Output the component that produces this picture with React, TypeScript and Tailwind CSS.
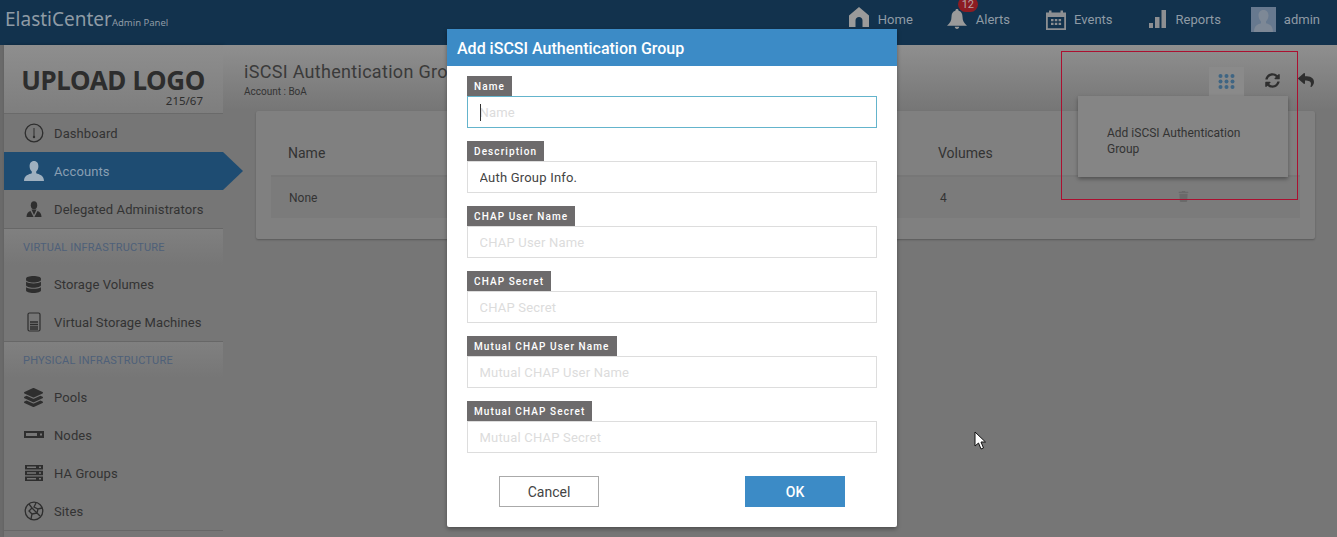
import type { ReactNode } from "react";
import { FaDatabase, FaLayerGroup, FaReply, FaSyncAlt, FaTrash } from "react-icons/fa";

function Gauge() {
  return (
    <svg width="20" height="20" viewBox="0 0 20 20" fill="none" stroke="#2e2e2e">
      <circle cx="10" cy="10" r="8.8" strokeWidth="1.3" />
      <path d="M10 5v8" strokeWidth="1" />
      <circle cx="10" cy="14" r="1.2" fill="#2e2e2e" stroke="none" />
    </svg>
  );
}

function Bust({ color, size }: { color: string; size: number }) {
  return (
    <svg width={size} height={size} viewBox="0 0 20 20" fill={color}>
      <path d="M10 0c3 0 4.400 2.300 4.400 5.200 0 2.300-1 4.300-2.200 5.300v1.700c2.800 1 7.800 2 7.800 7.800H0c0-5.800 5-6.800 7.800-7.800v-1.700C6.600 9.500 5.600 7.500 5.600 5.200 5.600 2.300 7 0 10 0z" />
    </svg>
  );
}

function Delegates() {
  return (
    <svg width="16" height="17" viewBox="0 0 16 17" fill="#2e2e2e">
      <ellipse cx="8" cy="4.200" rx="3.200" ry="4" />
      <path d="M5.500 8.500L8 14l2.500-5.500z" />
      <path d="M0.500 16c0-3.500 1.600-5.500 4-6L7.600 16zM8.400 16l3.100-6c2.400.5 4 2.500 4 6z" />
    </svg>
  );
}

function Machine() {
  return (
    <svg width="14" height="20" viewBox="0 0 14 20" fill="none">
      <rect x="1" y="1" width="12" height="18" rx="1.500" stroke="#2e2e2e" strokeWidth="1.200" />
      <path d="M3 10h8M3 12.500h8M3 15h8M3 17h8" stroke="#2e2e2e" strokeWidth="1.400" />
    </svg>
  );
}

function Node() {
  return (
    <svg width="20" height="8" viewBox="0 0 20 8" fill="#2e2e2e">
      <path d="M0 0h20v7H0zM2 2v3h11V2zM16 2.500v2h2v-2z" fillRule="evenodd" />
    </svg>
  );
}

function Rack() {
  return (
    <svg width="18" height="16" viewBox="0 0 18 16" fill="#2e2e2e">
      <path d="M0 0h18v4.500H0zM2 1.500v1.500h9V1.500zM14 1.500v1.500h2V1.500zM0 5.700h18v4.500H0zM2 7.200v1.500h9V7.200zM14 7.200v1.500h2V7.200zM0 11.400h18V16H0zM2 12.900v1.500h9v-1.500zM14 12.900v1.500h2v-1.500z" fillRule="evenodd" />
    </svg>
  );
}

function Globe() {
  return (
    <svg width="20" height="20" viewBox="0 0 20 20" fill="none" stroke="#2e2e2e" strokeWidth="1.300">
      <circle cx="10" cy="10" r="8.800" />
      <path d="M5 3l3 4-3 3 3 3-1 5M12 2l-2 4 4 2 4-1M14 8l-1 4 3 3M8 7l5 5-5 1" />
    </svg>
  );
}

function HomeIcon() {
  return (
    <svg width="20" height="20" viewBox="0 0 20 20" fill="#9a9a9a" className="-translate-y-[3px]">
      <path d="M10 0l10 8.500V20h-6.500v-6.500c0-2-1.500-3.500-3.500-3.500s-3.500 1.500-3.500 3.500V20H0V8.500z" />
    </svg>
  );
}

function BellIcon() {
  return (
    <svg width="20" height="20" viewBox="0 0 20 20" fill="#9a9a9a" className="-translate-y-[1px]">
      <path d="M10 0c1 0 1.600.7 1.600 1.700 2.800.8 3.900 3 3.900 6 0 4 1.500 6.500 4.500 9H0c3-2.500 4.500-5 4.500-9 0-3 1.100-5.200 3.900-6C8.400.7 9 0 10 0zM7.800 17.800h4.400c0 1.300-1 2.200-2.200 2.200s-2.200-.9-2.200-2.200z" />
    </svg>
  );
}

function Calendar() {
  return (
    <svg width="20" height="20" viewBox="0 0 20 20" fill="#8d8f92">
      <path d="M0 2.500h3V.5h2.500v2h9v-2H17v2h3V20H0zM1.800 7v11.200h16.400V7z" fillRule="evenodd" />
      <path d="M5 9h2.500v2.200H5zM8.800 9h2.500v2.200H8.800zM12.600 9h2.500v2.200h-2.500zM5 12.800h2.500V15H5zM8.800 12.800h2.500V15H8.800zM12.600 12.800h2.500V15h-2.500z" />
    </svg>
  );
}

function Bars() {
  return (
    <svg width="17" height="18" viewBox="0 0 17 18" fill="#8d8f92" className="-translate-y-[1px]">
      <path d="M0 13h4v5H0zM6 7h4.500v11H6zM12.500 0H17v18h-4.500z" />
    </svg>
  );
}

function Avatar() {
  return (
    <svg width="25" height="25" viewBox="0 0 25 25" className="bg-[#67798f]">
      <path d="M12.500 3c3.500 0 5 2.600 5 5.600 0 2.600-1.200 4.800-2.500 5.800v1.800c3 1 7 2 7 8.800H3c0-6.800 4-7.800 7-8.800v-1.800c-1.300-1-2.500-3.200-2.500-5.800C7.500 5.600 9 3 12.500 3z" fill="#7d8896" />
    </svg>
  );
}

function NavLink({ icon, label, gap }: { icon: ReactNode; label: string; gap: string }) {
  return (
    <div className={`flex h-[38px] items-center text-[13px] text-[#8f9ba5] ${gap}`}>
      {icon}
      <span>{label}</span>
    </div>
  );
}

function SideItem({ icon, label, active }: { icon: ReactNode; label: string; active?: boolean }) {
  return (
    <div className={`relative flex h-[38px] items-center text-[13px] tracking-[0.1px] ${active ? "bg-[#1e4c72] text-[#8a9fb2]" : "text-[#333333]"}`}>
      <div className="flex w-[50px] shrink-0 items-center justify-center pl-[9px]">{icon}</div>
      <span className="pt-[2px]">{label}</span>
      {active && <div className="absolute top-0 left-full h-0 w-0 border-y-[19px] border-l-[20px] border-y-transparent border-l-[#1e4c72]" />}
    </div>
  );
}

function SideHeading({ children }: { children: string }) {
  return (
    <div className="flex h-[37px] items-center border-t border-[#676767] bg-gradient-to-b from-[#808080] to-[#767676] pt-[2px] pl-[19px] text-[11px] tracking-[0.2px] text-[#4e6079]">
      {children}
    </div>
  );
}

function Field({ label, placeholder, value, focused }: { label: string; placeholder: string; value?: string; focused?: boolean }) {
  return (
    <div className="flex flex-col items-start">
      <label className="flex h-5 items-center bg-[#6d6b6c] px-[7px] text-[10px] font-medium tracking-[1.1px] text-white">{label}</label>
      <div className="relative h-8 w-full">
        <input
          readOnly
          placeholder={placeholder}
          defaultValue={value}
          className={`h-8 w-full border px-[11.5px] text-[13px] tracking-[0.2px] text-[#444444] outline-none placeholder:text-[#dcdcdc] ${focused ? "border-[#64b4cc]" : "border-[#dddddd]"}`}
        />
        {focused && <div className="absolute top-[8px] left-[13px] h-[17px] w-px bg-[#333333]" />}
      </div>
    </div>
  );
}

export default function App() {
  return (
    <div className="relative h-[537px] w-[1337px] overflow-hidden bg-[#767676] font-['Roboto',sans-serif]">
      <header className="flex h-[45px] items-start bg-[#12324d]">
        <div className="flex items-baseline pt-[5px] pl-[5px] font-['Noto_Sans',sans-serif] text-[#8f9ba5]">
          <span className="text-[19px] leading-[28px]">ElastiCenter</span>
          <span className="text-[9.5px]">Admin Panel</span>
        </div>
        <nav className="ml-auto flex h-[39px] items-center pr-[17px]">
          <div className="mr-[34px]">
            <NavLink icon={<HomeIcon />} label="Home" gap="gap-[9px]" />
          </div>
          <div className="relative mr-[36px]">
            <NavLink icon={<BellIcon />} label="Alerts" gap="gap-[9px]" />
            <div className="absolute top-[-4px] left-[11px] flex h-[15px] w-[20px] items-center justify-center rounded-full bg-[#8c1c22] text-[11px] leading-[11px] text-[#b7a4a5]">12</div>
          </div>
          <div className="mr-[36px]">
            <NavLink icon={<Calendar />} label="Events" gap="gap-[8px]" />
          </div>
          <div className="mr-[30px]">
            <NavLink icon={<Bars />} label="Reports" gap="gap-[10px]" />
          </div>
          <div className="flex items-center gap-[8px] text-[13px] text-[#8f9ba5]">
            <Avatar />
            <span>admin</span>
          </div>
        </nav>
      </header>

      <div className="flex h-[492px]">
        <div className="w-[4px] shrink-0 bg-[#6a6a6a]" />
        <aside className="w-[219px] shrink-0 bg-[#767676] shadow-[1px_0_3px_rgba(0,0,0,0.25)]">
          <div className="flex h-[69px] flex-col items-end border-b border-[#6a6a6a] bg-gradient-to-b from-[#8e8e8e] to-[#7e7e7e] pt-[21px] pr-[18px] font-['Noto_Sans',sans-serif] text-[#2d2d2d]">
            <div className="text-[26px] leading-[28px] font-bold tracking-[-0.35px]">UPLOAD LOGO</div>
            <div className="pt-[1px] pr-[2px] text-[11.5px] leading-[12px]">215/67</div>
          </div>
          <SideItem icon={<Gauge />} label="Dashboard" />
          <SideItem icon={<Bust color="#9fb0bf" size={20} />} label="Accounts" active />
          <SideItem icon={<Delegates />} label="Delegated Administrators" />
          <SideHeading>VIRTUAL INFRASTRUCTURE</SideHeading>
          <SideItem icon={<FaDatabase className="size-[17px] text-[#2e2e2e]" />} label="Storage Volumes" />
          <SideItem icon={<Machine />} label="Virtual Storage Machines" />
          <SideHeading>PHYSICAL INFRASTRUCTURE</SideHeading>
          <SideItem icon={<FaLayerGroup className="size-[19px] text-[#2e2e2e]" />} label="Pools" />
          <SideItem icon={<Node />} label="Nodes" />
          <SideItem icon={<Rack />} label="HA Groups" />
          <SideItem icon={<Globe />} label="Sites" />
          <div className="border-t border-[#676767]" />
        </aside>

        <main className="min-w-0 flex-1 bg-gradient-to-b from-[#8f8f8f] to-[#767676] to-[65px]">
          <div className="flex h-[66px] items-start pl-[21px]">
            <div className="pt-[15px]">
              <h1 className="text-[18px] leading-[24px] tracking-[0.3px] text-[#3a3a3a]">iSCSI Authentication Group</h1>
              <p className="pt-[2px] text-[10px] leading-[12px] text-[#333333]">Account : BoA</p>
            </div>
            <div className="ml-auto flex items-start pt-[22px] pr-[23px]">
              <div className="flex h-[29px] w-[35px] items-center justify-center bg-[#8a8a8a]">
                <svg width="17" height="15" viewBox="0 0 17 15" fill="#3f6583">
                  <circle cx="2.500" cy="2" r="2" /><circle cx="8.500" cy="2" r="2" /><circle cx="14.500" cy="2" r="2" />
                  <circle cx="2.500" cy="7.500" r="2" /><circle cx="8.500" cy="7.500" r="2" /><circle cx="14.500" cy="7.500" r="2" />
                  <circle cx="2.500" cy="13" r="2" /><circle cx="8.500" cy="13" r="2" /><circle cx="14.500" cy="13" r="2" />
                </svg>
              </div>
              <FaSyncAlt className="mt-[6px] ml-[21px] size-[15px] text-[#2e2e2e]" />
              <FaReply className="mt-[5px] ml-[18px] size-[16px] text-[#2e2e2e]" />
            </div>
          </div>
          <section className="mr-[22px] ml-[33px] h-[128px] rounded-[2px] bg-[#808080] px-[15px] pt-[21px] shadow-[0_1px_2px_rgba(0,0,0,0.25)]">
            <div className="flex h-[43px] items-start pt-[11px] pl-[17px] text-[14px] leading-[20px] text-[#333333]">
              <span className="w-[650px]">Name</span>
              <span>Volumes</span>
            </div>
            <div className="relative flex h-[43px] items-center border-t-2 border-[#777777] bg-[#7b7b7b] pl-[18px] text-[12px] text-[#333333]">
              <span className="w-[651px]">None</span>
              <span>4</span>
              <FaTrash className="absolute top-[14px] left-[907px] size-[11px] text-[#6a6a6a]" />
            </div>
          </section>
        </main>
      </div>

      {/* dropdown off the toolbar */}
      <div className="absolute top-[96px] left-[1078px] h-[81px] w-[210px] bg-[#858585] pt-[29px] pl-[29px] text-[12px] leading-[16px] text-[#333333] shadow-[0_2px_4px_rgba(0,0,0,0.35)]">
        Add iSCSI Authentication
        <br />
        Group
      </div>
      <div className="absolute top-[51px] left-[1061px] h-[149px] w-[237px] border border-[#ab1030]" />

      <div className="absolute top-[29px] left-[447px] h-[498px] w-[450px] rounded-b-[2px] bg-white shadow-[0_2px_4px_rgba(0,0,0,0.35)]">
        <div className="flex h-[37px] items-center bg-[#3c8bc6] pt-[2px] pl-[10px] text-[16px] font-medium text-white">Add iSCSI Authentication Group</div>
        <div className="flex flex-col gap-[13px] px-[20px] pt-[10px]">
          <Field label="Name" placeholder="Name" focused />
          <Field label="Description" placeholder="Description" value="Auth Group Info." />
          <Field label="CHAP User Name" placeholder="CHAP User Name" />
          <Field label="CHAP Secret" placeholder="CHAP Secret" />
          <Field label="Mutual CHAP User Name" placeholder="Mutual CHAP User Name" />
          <Field label="Mutual CHAP Secret" placeholder="Mutual CHAP Secret" />
        </div>
        <div className="flex justify-between px-[52px] pt-[23px]">
          <button className="h-[31px] w-[100px] border border-[#aaaaaa] pt-[2px] text-[14px] text-[#444444]">Cancel</button>
          <button className="h-[31px] w-[100px] bg-[#3c8bc6] pt-[2px] text-[14px] font-medium text-white">OK</button>
        </div>
      </div>

      <svg className="absolute top-[431px] left-[974px]" width="13" height="19" viewBox="0 0 13 19">
        <path d="M1 1v14l3.500-3 2.500 6 2.500-1-2.500-6h4.500z" fill="#ffffff" stroke="#111111" strokeWidth="1" />
      </svg>
    </div>
  );
}
